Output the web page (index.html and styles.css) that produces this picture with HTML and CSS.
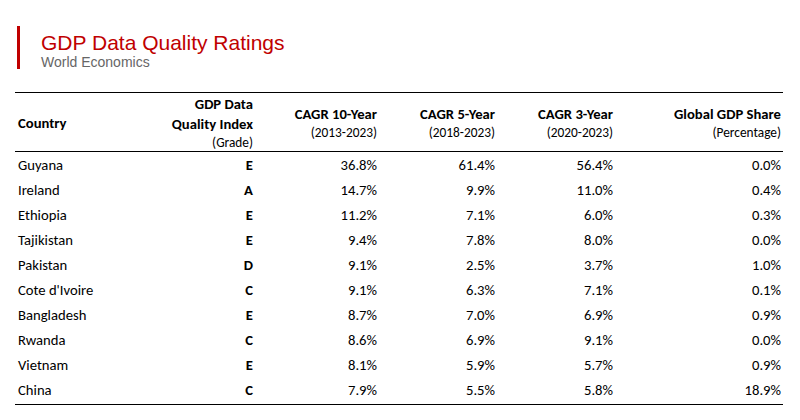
FILE: index.html
```html
<!DOCTYPE html>
<html lang="en">
<head>
<meta charset="utf-8">
<title>GDP Data Quality Ratings</title>
<link rel="stylesheet" href="styles.css">
</head>
<body>
<div class="page">
  <header class="heading">
    <h1 class="title">GDP Data Quality Ratings</h1>
    <div class="subtitle">World Economics</div>
  </header>
  <table class="ratings">
    <colgroup>
      <col class="w-country"><col class="w-grade"><col class="w-c10"><col class="w-c5"><col class="w-c3"><col class="w-share">
    </colgroup>
    <thead>
      <tr>
        <th class="left">Country</th>
        <th><span class="hl">GDP Data</span><span class="hl">Quality Index</span><span class="sub">(Grade)</span></th>
        <th><span class="hl">CAGR 10-Year</span><span class="sub">(2013-2023)</span></th>
        <th><span class="hl">CAGR 5-Year</span><span class="sub">(2018-2023)</span></th>
        <th><span class="hl">CAGR 3-Year</span><span class="sub">(2020-2023)</span></th>
        <th><span class="hl">Global GDP Share</span><span class="sub">(Percentage)</span></th>
      </tr>
    </thead>
    <tbody>
      <tr><td class="left">Guyana</td><td class="grade">E</td><td>36.8%</td><td>61.4%</td><td>56.4%</td><td>0.0%</td></tr>
      <tr><td class="left">Ireland</td><td class="grade">A</td><td>14.7%</td><td>9.9%</td><td>11.0%</td><td>0.4%</td></tr>
      <tr><td class="left">Ethiopia</td><td class="grade">E</td><td>11.2%</td><td>7.1%</td><td>6.0%</td><td>0.3%</td></tr>
      <tr><td class="left">Tajikistan</td><td class="grade">E</td><td>9.4%</td><td>7.8%</td><td>8.0%</td><td>0.0%</td></tr>
      <tr><td class="left">Pakistan</td><td class="grade">D</td><td>9.1%</td><td>2.5%</td><td>3.7%</td><td>1.0%</td></tr>
      <tr><td class="left">Cote d'Ivoire</td><td class="grade">C</td><td>9.1%</td><td>6.3%</td><td>7.1%</td><td>0.1%</td></tr>
      <tr><td class="left">Bangladesh</td><td class="grade">E</td><td>8.7%</td><td>7.0%</td><td>6.9%</td><td>0.9%</td></tr>
      <tr><td class="left">Rwanda</td><td class="grade">C</td><td>8.6%</td><td>6.9%</td><td>9.1%</td><td>0.0%</td></tr>
      <tr><td class="left">Vietnam</td><td class="grade">E</td><td>8.1%</td><td>5.9%</td><td>5.7%</td><td>0.9%</td></tr>
      <tr class="last"><td class="left">China</td><td class="grade">C</td><td>7.9%</td><td>5.5%</td><td>5.8%</td><td>18.9%</td></tr>
    </tbody>
  </table>
</div>
</body>
</html>
```
FILE: styles.css
```css
html, body {
  margin: 0;
  padding: 0;
  background: #ffffff;
}

.page {
  padding: 26px 0 0 15px;
}

.heading {
  margin-left: 2px;
  border-left: 3px solid #c00000;
  padding: 4px 0 0 21px;
  font-family: "Liberation Sans", Arial, sans-serif;
}

.title {
  margin: 0;
  font-size: 21px;
  line-height: 26px;
  font-weight: normal;
  color: #c00000;
}

.subtitle {
  font-size: 14px;
  line-height: 13px;
  margin-bottom: -2px;
  color: #666666;
}

.ratings {
  margin-top: 25px;
  width: 768px;
  table-layout: fixed;
  border-collapse: collapse;
  font-family: Carlito, Calibri, "Liberation Sans", sans-serif;
  font-size: 14.67px;
  color: #000000;
}

.w-country { width: 145px; }
.w-grade { width: 95px; }
.w-c10 { width: 124px; }
.w-c5 { width: 118px; }
.w-c3 { width: 118px; }
.w-share { width: 168px; }

.ratings th {
  border-top: 1px solid #000000;
  border-bottom: 1px solid #000000;
  padding: 1px 2px 0 3px;
  height: 56px;
  vertical-align: middle;
  text-align: right;
  font-weight: bold;
  line-height: 20px;
}

.ratings th.left,
.ratings td.left {
  text-align: left;
}

.hl {
  display: block;
  line-height: 20px;
}

.sub {
  display: block;
  font-weight: normal;
  font-size: 13.33px;
  line-height: 17px;
}

.ratings td {
  padding: 2px 2px 0 3px;
  line-height: 23px;
  text-align: right;
  white-space: nowrap;
}

.ratings td.grade {
  font-weight: bold;
}

.ratings tr.last td {
  padding-bottom: 2px;
  border-bottom: 1px solid #000000;
}
```
